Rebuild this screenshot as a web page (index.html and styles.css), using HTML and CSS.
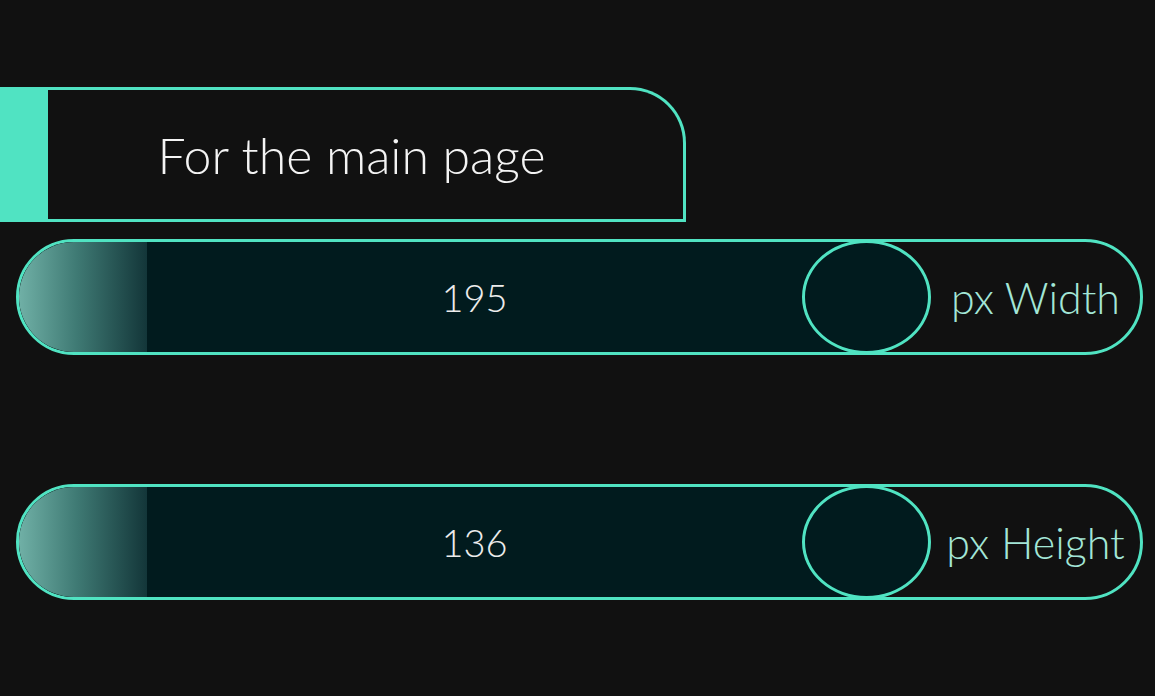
FILE: index.html
```html
<!DOCTYPE html>
<html lang="en">
<head>
<meta charset="utf-8">
<title>Sizes</title>
<link rel="stylesheet" href="styles.css">
</head>
<body>
<div class="page">
  <div class="header">
    <div class="tab-mark"></div>
    <div class="tab"><span class="title">For the main page</span></div>
  </div>
  <div class="sliders">
    <div class="slider">
      <div class="fill">
        <div class="grip"></div>
        <div class="value">195</div>
        <div class="knob"></div>
      </div>
      <div class="label">px Width</div>
    </div>
    <div class="slider">
      <div class="fill">
        <div class="grip"></div>
        <div class="value">136</div>
        <div class="knob"></div>
      </div>
      <div class="label">px Height</div>
    </div>
  </div>
</div>
</body>
</html>
```

FILE: styles.css
```css
html, body {
  margin: 0;
  padding: 0;
  background: #111111;
  width: 1155px;
  height: 696px;
  overflow: hidden;
  font-family: "Lato", "Open Sans", sans-serif;
  font-weight: 300;
}

.page {
  padding-top: 87px;
}

.header {
  display: flex;
  width: 686px;
  height: 135px;
}

.tab-mark {
  width: 48px;
  background: #50e3c2;
}

.tab {
  flex: 1;
  box-sizing: border-box;
  border: 3px solid #50e3c2;
  border-left: none;
  border-top-right-radius: 56px;
  display: flex;
  align-items: center;
  justify-content: center;
  padding-right: 28px;
}

.title {
  color: #f4f4f4;
  font-size: 50px;
  line-height: 1;
}

.sliders {
  display: flex;
  flex-direction: column;
  gap: 129px;
  padding: 17px 0 0 16px;
}

.slider {
  width: 1127px;
  height: 116px;
  box-sizing: border-box;
  border: 3px solid #50e3c2;
  border-radius: 58px;
  display: flex;
}

.fill {
  width: 912px;
  display: flex;
  background: linear-gradient(90deg, #011b1e 0, #011b1e calc(100% - 64px), transparent calc(100% - 64px));
  border-radius: 55px 0 0 55px;
}

.grip {
  width: 128px;
  border-radius: 55px 0 0 55px;
  background: linear-gradient(90deg, #70b0a6 0%, #3f7a74 45%, #133639 100%);
}

.value {
  flex: 1;
  display: flex;
  align-items: center;
  justify-content: center;
  color: #ececec;
  font-size: 38px;
}

.knob {
  width: 129px;
  margin: -2px 0;
  box-sizing: border-box;
  border: 3px solid #50e3c2;
  border-radius: 50%;
  background: #011b1e;
}

.label {
  flex: 1;
  display: flex;
  align-items: center;
  justify-content: center;
  color: #a3e6d7;
  font-size: 43px;
  white-space: nowrap;
}
```
